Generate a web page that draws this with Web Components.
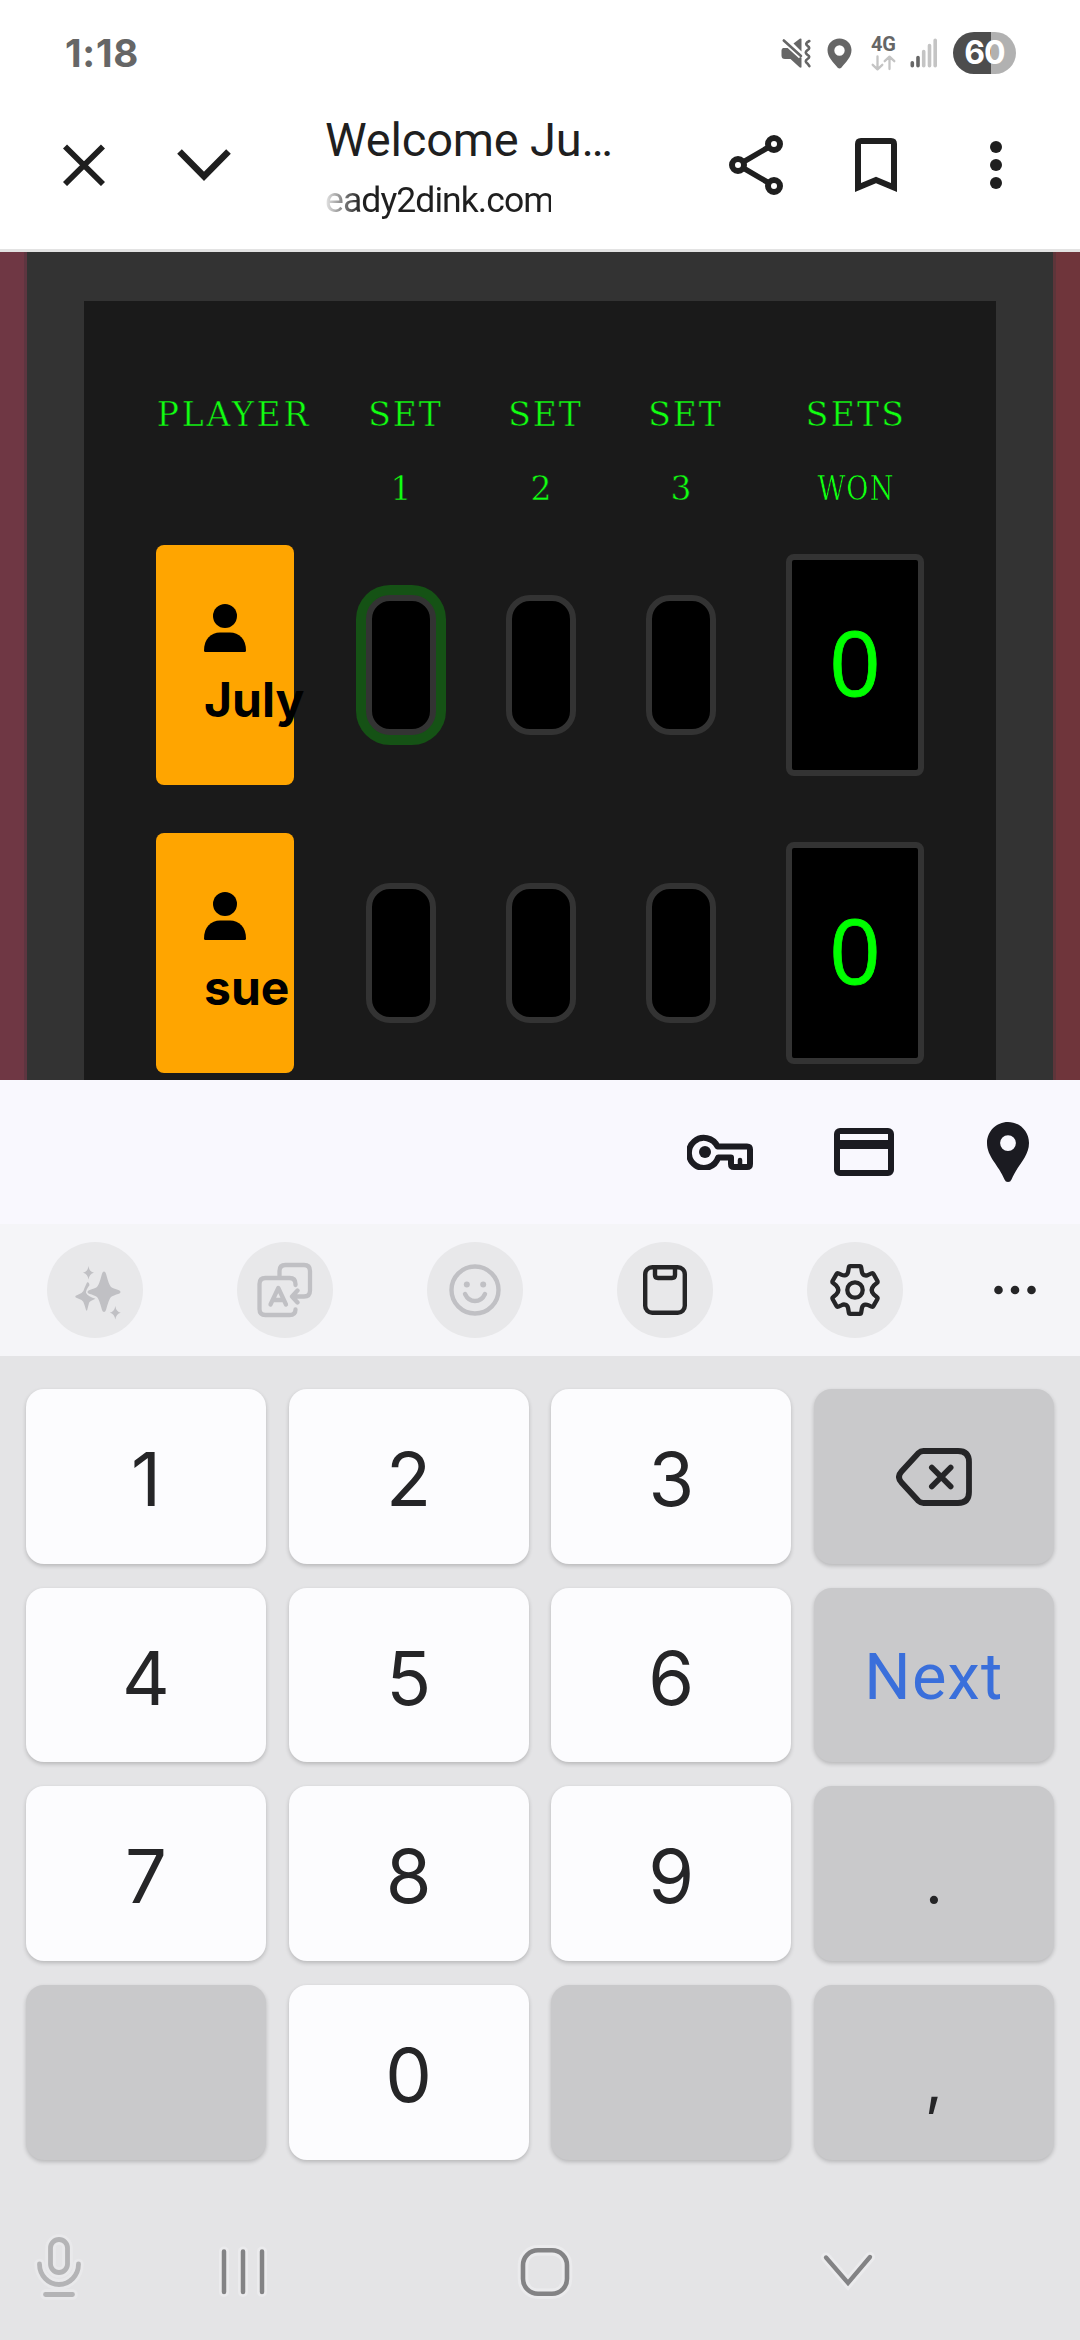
<!DOCTYPE html>
<html lang="en">
<head>
<meta charset="utf-8">
<title>Welcome July</title>
<style>
  html, body { margin: 0; padding: 0; }
  body { width: 1080px; height: 2340px; overflow: hidden; background: #fff; font-family: Inter, Roboto, sans-serif; }
</style>
</head>
<body>
<phone-screen>
  <status-bar></status-bar>
  <browser-bar></browser-bar>
  <score-page>
    <score-board>
      <player-row name="July" won="0" focused></player-row>
      <player-row name="sue" won="0"></player-row>
    </score-board>
  </score-page>
  <autofill-bar></autofill-bar>
  <keyboard-tools></keyboard-tools>
  <number-pad></number-pad>
  <nav-bar></nav-bar>
</phone-screen>

<script>
const define = (name, markup, extra) => {
  const tpl = document.createElement('template');
  customElements.define(name, class extends HTMLElement {
    connectedCallback() {
      if (this.shadowRoot) return;
      tpl.innerHTML = typeof markup === 'function' ? markup(this) : markup;
      this.attachShadow({ mode: 'open' }).append(tpl.content.cloneNode(true));
      if (extra) extra(this);
    }
  });
};

/* name: [width, height, svg content] */
const ICONS = {
  mute: [30, 30, `<g fill="#666"><path d="M2 10h8l10.500 10v9.300q-.8.8-2 0L9.500 21H4q-3.500 0-3.500-3.500v-5q0-1.700 1.500-2.500z"/><path d="M12.500 5.500 18.700.8q1.800-.8 1.800.8v12z"/></g><path d="M2.800 2.500 20 18" stroke="#fff" stroke-width="6"/><path d="M2.800 2.500 20 18" stroke="#666" stroke-width="2.600" stroke-linecap="round"/><path d="M28.300 2.200q-5 2.400-1.800 4.800 3.500 2.200 0 4.300-3.500 2.400 0 4.700 3.500 2 0 4.200-3.500 2.300 0 4.600l1.800 2.500" transform="translate(0 .8)" fill="none" stroke="#666" stroke-width="2.600" stroke-linecap="round" stroke-linejoin="round"/>`],
  pinSmall: [25, 31, `<path fill="#666" fill-rule="evenodd" d="M12.500.5C5.600.5.500 5.700.500 12c0 7 5.500 12 10.200 17.700q1.800 1.600 3.600 0C19 24 24.500 19 24.500 12 24.500 5.700 19.400.5 12.500.5zm0 6.800a5.200 5.200 0 1 1 0 10.400 5.200 5.200 0 0 1 0-10.400z"/>`],
  updown: [25, 16, `<path d="M6.500 1.500v12.500M1.700 9.800l4.800 4.500 4.800-4.500M18.500 14V2M13.700 6.200l4.800-4.500 4.800 4.500" fill="none" stroke="#c4c4c4" stroke-width="2.300" stroke-linecap="round" stroke-linejoin="round"/>`],
  signal: [28, 30, `<g stroke-width="3.600" stroke-linecap="round"><path stroke="#666" d="M2.300 24.800v2.900M8 19.500v8.200"/><path stroke="#c4c4c4" d="M13.700 13.500v14.200M19.500 7.500v20.200M25.200 2.300v25.400"/></g>`],
  close: [42, 42, `<path d="M2 2.500 40 40M40 2.500 2 40" stroke="#1f1f1f" stroke-width="5.800"/>`],
  chevron: [54, 32, `<path d="M2.500 2.500 27 27.300 51.500 2.500" fill="none" stroke="#1f1f1f" stroke-width="6.500"/>`],
  share: [54, 60, `<path d="M45 9 9 30l36 21" fill="none" stroke="#1f1f1f" stroke-width="5.500"/><g fill="#fff" stroke="#1f1f1f" stroke-width="6"><circle cx="45" cy="9" r="6"/><circle cx="9" cy="30" r="6"/><circle cx="45" cy="51" r="6"/></g>`],
  bookmark: [42, 54, `<path d="M3 49.500V6q0-3 3-3h30q3 0 3 3v43.500L21 42z" fill="none" stroke="#1f1f1f" stroke-width="6" stroke-miterlimit="10"/>`],
  more: [12, 50, `<g fill="#1f1f1f"><circle cx="6" cy="7" r="6"/><circle cx="6" cy="25" r="6"/><circle cx="6" cy="43" r="6"/></g>`],
  person: [42, 48, `<circle cx="21" cy="12" r="12"/><path d="M0 46.500C0 35 7 28.500 16 28.500h10c9 0 16 6.500 16 18q0 1.500-1.500 1.500h-39Q0 48 0 46.500z"/>`],
  key: [66, 36, `<path d="M30.500 12.500H60q3 0 3 3V30q0 3-3 3H47q-3 0-3-3v-6.500H31.200A15 15 0 1 1 30.500 12.500z" fill="none" stroke="#1b1b21" stroke-width="6" stroke-linejoin="round"/><circle cx="18" cy="18" r="6" fill="#1b1b21"/><path d="M53 32v-6" stroke="#1b1b21" stroke-width="4.500" stroke-linecap="round"/>`],
  card: [60, 48, `<rect x="3" y="3" width="54" height="42" rx="3" fill="none" stroke="#1b1b21" stroke-width="6"/><path fill="#1b1b21" d="M3 12h54v9H3z"/>`],
  pin: [42, 60, `<path fill="#1b1b21" fill-rule="evenodd" d="M21 0C9.400 0 0 9.300 0 21c0 14 12 22.500 17.500 36.500Q18.500 60 21 60t3.500-2.500C30 43.500 42 35 42 21 42 9.300 32.600 0 21 0zm0 13.200a7.900 7.900 0 1 1 0 15.800 7.900 7.900 0 0 1 0-15.800z"/>`],
  sparkle: [46, 54, `<g fill="#c0c0c4"><path d="M29 5.500q1.300 0 2 2.300 3 11.500 5 13.200 2 1.400 8 3.200 1.500.8 1.500 1.800t-1.500 1.700q-6 1.700-8 3.300-2 1.700-5 13-.7 2-2 2t-2-2q-3-11.300-5-13-2-1.600-8-3.300-1.500-.7-1.500-1.700t1.500-1.800q6-1.800 8-3.200 2-1.700 5-13.200.7-2.300 2-2.300z"/><path d="M12 16.500q1-1 2 .7l.5 2q-3.700 4.500-3.500 7.500 1.500 3.500 9.500 6-6 2.500-6.500 4.300l-1.800 7Q12 45.500 11 44L9.500 39q-1-4-3-5L.8 31.500q-1-1 0-1.800L6.500 27q2-1 3-5z"/><path d="M13.500 0q.8 5.800 5.500 6.800-4.700 1-5.500 6.700Q12.700 7.800 8 6.800 12.700 5.800 13.500 0zM40.300 40q.8 5.800 5.500 6.800-4.700 1-5.500 6.700-.8-5.700-5.500-6.700 4.700-1 5.500-6.800z"/></g>`],
  translate: [56, 56, `<g fill="none" stroke="#c0c0c4" stroke-width="4.300" stroke-linecap="round" stroke-linejoin="round"><path d="M38.500 23v-1q0-6-6-6H8.500q-6 0-6 6v25q0 6 6 6h24q6 0 6-5.500"/><path d="M22.500 14V9q0-6 6-6H47q6 0 6 6v19.500q0 6-6 6H36M40.500 28.500 35 34.500l5.500 6"/><path d="M13.500 42.500 21.300 26 29 42.500M16.500 38H26"/></g>`],
  smile: [52, 52, `<circle cx="26" cy="26" r="23.500" fill="none" stroke="#c0c0c4" stroke-width="4.400"/><circle cx="17.800" cy="20.500" r="3" fill="#c0c0c4"/><circle cx="34.200" cy="20.500" r="3" fill="#c0c0c4"/><path d="M16 30q3.300 7 10 7t10-7" fill="none" stroke="#c0c0c4" stroke-width="4.400" stroke-linecap="round"/>`],
  clipboard: [44, 50, `<g fill="none" stroke="#252527" stroke-width="4.400" stroke-linejoin="round"><rect x="2.200" y="2.200" width="39.600" height="45.600" rx="7"/><path d="M12 2.500V10q0 3 3 3h14q3 0 3-3V2.500"/></g>`],
  gear: [50, 52, `<g fill="none" stroke="#252527" stroke-width="4.300" stroke-linejoin="round"><path d="M20.300 2.200h9.400q1.300 0 1.500 1.400l.7 4.300q.5 3 3.300 3.500 1.500.3 3-.5l3.300-1.500q1.300-.6 2 .7l3.800 6.700q.7 1.300-.3 2.100L43.700 21.700Q39.700 26 43.700 30.300L47 33.100q1 .8.300 2.100l-3.800 6.700q-.7 1.300-2 .7l-3.300-1.500q-1.500-.7-3-.5-2.800.5-3.300 3.500l-.7 4.300q-.2 1.400-1.500 1.400h-9.400q-1.300 0-1.500-1.400l-.7-4.300q-.5-3-3.300-3.500-1.500-.3-3 .5l-3.300 1.500q-1.300.6-2-.7L2.700 35.200q-.7-1.300.3-2.100l3.300-2.800Q10.300 26 6.300 21.700L3 18.900q-1-.8-.3-2.100l3.800-6.700q.7-1.300 2-.7l3.300 1.500q1.500.7 3 .5 2.800-.5 3.300-3.500l.7-4.300q.2-1.400 1.500-1.400z"/><circle cx="25" cy="26" r="7.700"/></g>`],
  dots: [42, 10, `<g fill="#252527"><circle cx="4.500" cy="5" r="4.300"/><circle cx="21" cy="5" r="4.300"/><circle cx="37.500" cy="5" r="4.300"/></g>`],
  backspace: [76, 58, `<g fill="none" stroke="#252527" stroke-linecap="round" stroke-linejoin="round"><path stroke-width="5.800" d="M27.500 3H62q11 0 11 11v30q0 11-11 11H27.500q-3 0-5-2L5.500 34.500Q.5 29 5.500 23.500L22.500 5q2-2 5-2z"/><path stroke-width="5.600" d="M35.800 19.500 54.700 38.500M54.700 19.500 35.800 38.500"/></g>`],
  mic: [56, 70, `<g fill="none" stroke-linecap="round"><g stroke="#e9e9eb" stroke-width="10.500"><rect x="17.500" y="7.500" width="17" height="33" rx="8.500"/><path d="M6.500 32a19.500 20.500 0 0 0 39 0M12.500 62.500h27"/></g><g stroke="#b4b4b6" stroke-width="4.800"><rect x="17.500" y="7.500" width="17" height="33" rx="8.500"/><path d="M6.500 32a19.500 20.500 0 0 0 39 0M12.500 62.500h27"/></g></g>`],
  recents: [50, 54, `<g stroke-linecap="round"><path stroke="#ebebed" stroke-width="10" d="M6 6.500V47M25 6.500V47M44 6.500V47"/><path stroke="#838385" stroke-width="4.500" d="M6 6.500V47M25 6.500V47M44 6.500V47"/></g>`],
  home: [56, 56, `<g fill="none"><rect x="6" y="6.200" width="44" height="43.600" rx="15" stroke="#ebebed" stroke-width="10.500"/><rect x="6" y="6.200" width="44" height="43.600" rx="15" stroke="#838385" stroke-width="4.600"/></g>`],
  down: [56, 40, `<g fill="none" stroke-linecap="round"><path d="M6 6.500 28 32 50 6" stroke="#ebebed" stroke-width="10"/><path d="M6 6.500 28 32 50 6" stroke="#838385" stroke-width="4.300"/></g>`]
};

define('ui-icon', el => {
  const [w, h, body] = ICONS[el.getAttribute('name')];
  return `<style>:host{display:block;flex:none;width:${w}px;height:${h}px}svg{display:block}</style>
  <svg width="${w}" height="${h}" viewBox="0 0 ${w} ${h}">${body}</svg>`;
});

/* A single line of type whose tracking is set so that it fills the given width. */
define('type-line', `<style>:host{display:block;flex:none;white-space:pre}span{display:inline-block}</style><span><slot></slot></span>`, el => {
  const target = +el.getAttribute('fit');
  if (!target) return;
  const span = el.shadowRoot.querySelector('span');
  const n = [...el.textContent].length;
  span.style.letterSpacing = (target - span.offsetWidth) / n + 'px';
});

define('phone-screen', `<style>:host{display:flex;flex-direction:column;width:1080px;height:2340px;overflow:hidden;background:#fff}::slotted(*){flex:none}</style><slot></slot>`);

define('status-bar', `<style>
  :host{display:flex;align-items:center;height:106px;box-sizing:border-box;padding:0 64px 0 65px;color:#666}
  .time{font:700 38.500px/40px Inter;flex:1}
  .right{display:flex;align-items:center}
  .net{display:flex;flex-direction:column;align-items:center;margin:0 14px 0 19px;gap:2px}
  .net type-line{font:700 20px/17px Roboto;height:17px}
  .battery{display:flex;align-items:center;justify-content:center;width:63px;height:42px;border-radius:21px;margin-left:15px;background:linear-gradient(90deg,#4d4d4d 38px,#b1b1b1 38px);color:#fff;font:700 32px/42px Inter;letter-spacing:-1px}
</style>
<type-line class="time" fit="74">1:18</type-line>
<div class="right"><ui-icon name="mute"></ui-icon><ui-icon name="pinSmall" style="margin-left:16px"></ui-icon>
<div class="net"><type-line fit="25">4G</type-line><ui-icon name="updown"></ui-icon></div>
<ui-icon name="signal"></ui-icon><div class="battery"><span>60</span></div></div>`);

define('browser-bar', `<style>
  :host{display:flex;align-items:flex-start;height:146px;box-sizing:border-box;border-bottom:3px solid #e3e3e3;color:#1f1f1f;padding-left:63px}
  .text{margin:9px 0 0 94px;width:404px}
  .title{font:400 47px/50px Roboto}
  .url{font:400 35.500px/44px Roboto;margin-top:13px;width:226px;-webkit-mask-image:linear-gradient(90deg,transparent -4px,#000 36px);mask-image:linear-gradient(90deg,transparent -4px,#000 36px)}
</style>
<ui-icon name="close" style="margin-top:38px"></ui-icon>
<ui-icon name="chevron" style="margin:43px 0 0 72px"></ui-icon>
<div class="text"><type-line class="title" fit="288">Welcome Ju…</type-line><type-line class="url" fit="228">eady2dink.com</type-line></div>
<ui-icon name="share" style="margin-top:29px"></ui-icon>
<ui-icon name="bookmark" style="margin:32px 0 0 72px"></ui-icon>
<ui-icon name="more" style="margin:34px 0 0 93px"></ui-icon>`);

define('score-page', `<style>:host{display:flex;justify-content:center;height:828px;box-sizing:border-box;overflow:hidden;background:linear-gradient(90deg,#6f3744 0,#6f3744 24px,#5e3540 24px,#5e3540 540px,#5e353a 1056px,#6f353b 1056px)}</style><slot></slot>`);

define('score-board', `<style>
  :host{display:block;width:1026px;box-sizing:border-box;border:solid #333;border-width:49px 57px 0;background:#1a1a1a;height:900px;padding:76px 72px 0}
  .head{display:grid;grid-template-columns:138px 70px 70px 70px 138px;column-gap:70px;height:168px;font:400 33px/74px "DejaVu Serif",serif;color:#1f1;-webkit-text-stroke:.5px #1a1a1a;padding-top:1px;box-sizing:border-box}
  .head div{display:flex;flex-direction:column;align-items:center}
  .head div:first-child{padding-left:18px}
  .head .s{padding-left:13px}
  .head .n{margin-left:-9px}
  .head div:last-child{padding-left:6px}
  .won{transform:scaleX(.82)}
  .rows{display:flex;flex-direction:column;gap:48px}
</style>
<div class="head"><div><type-line fit="154">PLAYER</type-line></div>
<div class="s"><type-line fit="75">SET</type-line><type-line class="n">1</type-line></div>
<div class="s"><type-line fit="75">SET</type-line><type-line class="n">2</type-line></div>
<div class="s"><type-line fit="75">SET</type-line><type-line class="n">3</type-line></div>
<div><type-line fit="100">SETS</type-line><type-line class="won" fit="94">WON</type-line></div></div>
<div class="rows"><slot></slot></div>`);

define('player-row', el => `<style>
  :host{display:flex;align-items:center;height:240px}
  .card{width:138px;height:240px;box-sizing:border-box;padding:59px 0 0 48px;background:#ffa500;border-radius:8px;margin-right:72px;flex:none}
  .name{font:700 48px/56px Inter;color:#000;margin-top:20px}
  score-cell{margin-right:70px}
  .won{display:flex;align-items:center;justify-content:center;width:138px;height:222px;box-sizing:border-box;border:6px solid #333;border-radius:8px;background:#000;color:#0f0;font:500 90px/100px "Open Sans";-webkit-text-stroke:.8px #0f0;padding-bottom:8px}
</style>
<div class="card"><ui-icon name="person"></ui-icon><type-line class="name" fit="${el.getAttribute('name') === 'July' ? 100 : 85}">${el.getAttribute('name')}</type-line></div>
<score-cell ${el.hasAttribute('focused') ? 'focused' : ''}></score-cell><score-cell></score-cell><score-cell></score-cell>
<div class="won"><span>${el.getAttribute('won')}</span></div>`);

define('score-cell', `<style>
  :host{display:block;flex:none;width:70px;height:140px;box-sizing:border-box;background:#000;border:6px solid #333;border-radius:24px}
  :host([focused]){box-shadow:0 0 0 10px #155215}
</style>`);

define('autofill-bar', `<style>:host{display:flex;align-items:center;justify-content:flex-end;height:144px;box-sizing:border-box;padding-right:51px;background:#f9f8fe}ui-icon+ui-icon{margin-left:81px}ui-icon:last-child{margin-left:93px}</style>
<ui-icon name="key"></ui-icon><ui-icon name="card"></ui-icon><ui-icon name="pin"></ui-icon>`);

define('keyboard-tools', `<style>
  :host{display:flex;align-items:center;height:132px;background:#f5f5f8;padding-left:47px;gap:94px}
  .b{display:flex;align-items:center;justify-content:center;width:96px;height:96px;border-radius:50%;background:#e8e8ea}
  .b:first-child ui-icon{margin-right:2px}
  .b:nth-child(2) ui-icon{margin:5px 0 0 6px}
</style>
<div class="b"><ui-icon name="sparkle"></ui-icon></div><div class="b"><ui-icon name="translate"></ui-icon></div><div class="b"><ui-icon name="smile"></ui-icon></div><div class="b"><ui-icon name="clipboard"></ui-icon></div><div class="b"><ui-icon name="gear"></ui-icon></div><ui-icon name="dots" style="margin-left:-3px"></ui-icon>`);

define('pad-key', `<style>
  :host{display:flex;align-items:center;justify-content:center;box-sizing:border-box;border-radius:18px;background:#fcfcfe;color:#252527;box-shadow:0 2px 4px rgba(0,0,0,.2);font:400 74px/80px Inter;padding-top:5px}
  :host([dark]){background:#c9c9cb}
  :host([icon]){padding-top:1px}
  :host([mark]){font-size:62px;line-height:90px;padding-top:17px}
  :host([action]){color:#3a6fdb;font:400 65px/80px Roboto;padding-top:3px}
</style><slot></slot>`);

define('number-pad', `<style>
  :host{display:grid;grid-template-columns:repeat(4,240px);grid-template-rows:repeat(4,174.800px);justify-content:space-between;row-gap:23.900px;height:828px;box-sizing:border-box;padding:33px 26px 0;background:#e4e4e6}
</style>
<pad-key>1</pad-key><pad-key>2</pad-key><pad-key>3</pad-key><pad-key dark icon><ui-icon name="backspace"></ui-icon></pad-key>
<pad-key>4</pad-key><pad-key>5</pad-key><pad-key>6</pad-key><pad-key dark action><type-line fit="139">Next</type-line></pad-key>
<pad-key>7</pad-key><pad-key>8</pad-key><pad-key>9</pad-key><pad-key dark mark>.</pad-key>
<pad-key dark></pad-key><pad-key>0</pad-key><pad-key dark></pad-key><pad-key dark mark>,</pad-key>`);

define('nav-bar', `<style>:host{display:flex;align-items:flex-start;height:156px;box-sizing:border-box;background:#e4e4e6;padding:48px 0 0 33px}</style>
<ui-icon name="mic"></ui-icon>
<ui-icon name="recents" style="margin:13px 0 0 129px"></ui-icon>
<ui-icon name="home" style="margin:12px 0 0 249px"></ui-icon>
<ui-icon name="down" style="margin:19px 0 0 247px"></ui-icon>`);
</script>
</body>
</html>
